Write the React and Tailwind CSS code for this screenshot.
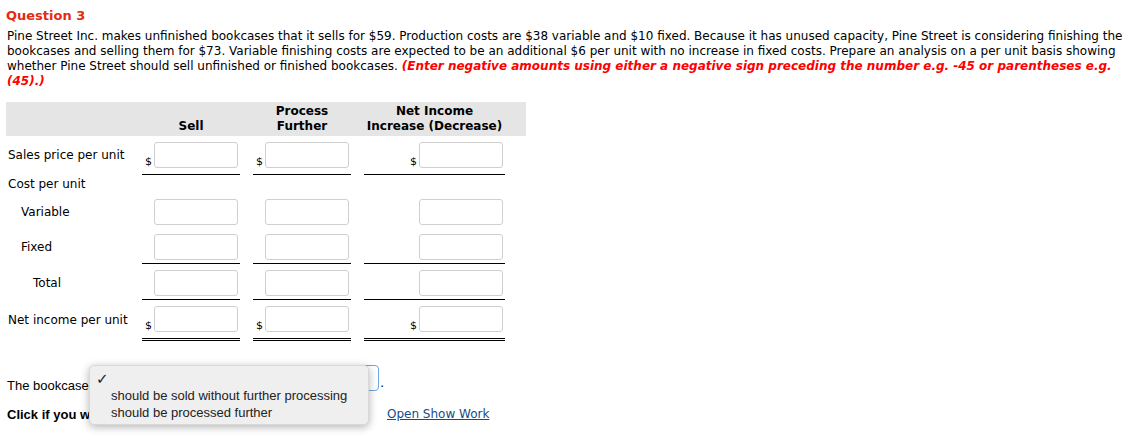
const verdana = "font-['Verdana','DejaVu_Sans',sans-serif]";
const arial = "font-['Liberation_Sans',Arial,sans-serif]";

function lineClass(line) {
    if (line === "single") return "border-b border-black";
    if (line === "double") return "border-b-[3px] border-double border-black";
    return "";
}

function CellInner({ dollar, w }) {
    return (
        <div className={`flex items-end justify-end pr-[2px] ${w}`}>
            {dollar && <span className="mr-[2px] text-[11px] leading-none mb-[1px]">$</span>}
            <div className="w-[84px] h-[26px] border border-[#cfcfcf] rounded-[3px] bg-white" />
        </div>
    );
}

function Row({ label, indent = "pl-[2px]", dollar = false, line = "none", pt = "pt-[6px]", pb = "pb-[6px]" }) {
    return (
        <div className={`flex items-stretch ${pt}`}>
            <div className={`w-[136px] flex items-center ${indent} ${pb}`}>{label}</div>
            <div className="flex items-stretch gap-[13px]">
                <div className={`${pb} ${lineClass(line)}`}>
                    <CellInner dollar={dollar} w="w-[98px]" />
                </div>
                <div className={`${pb} ${lineClass(line)}`}>
                    <CellInner dollar={dollar} w="w-[98px]" />
                </div>
                <div className={`${pb} ${lineClass(line)}`}>
                    <CellInner dollar={dollar} w="w-[141px]" />
                </div>
            </div>
        </div>
    );
}

export default function App() {
    return (
        <div className={`min-h-screen bg-white text-black ${verdana} text-[12px] leading-[15px] pl-[6px] pt-[8px] relative`}>
            <h2 className="font-bold text-[13px] leading-[15px] text-[#e22c10]">Question 3</h2>
            <p className="mt-[6px] pl-[1px] w-[1130px] leading-[15px]">
                Pine Street Inc. makes unfinished bookcases that it sells for $59. Production costs are $38 variable and $10 fixed. Because it has unused capacity, Pine Street is considering finishing the bookcases and selling them for $73. Variable finishing costs are expected to be an additional $6 per unit with no increase in fixed costs. Prepare an analysis on a per unit basis showing whether Pine Street should sell unfinished or finished bookcases.{" "}
                <span className="text-[#ff0000] font-bold italic">
                    (Enter negative amounts using either a negative sign preceding the number e.g. -45 or parentheses e.g. (45).)
                </span>
            </p>

            {/* analysis table */}
            <div className="mt-[13px] w-[520px]">
                <div className="flex bg-[#e5e5e5] h-[34px] font-bold items-end pb-[2px]">
                    <div className="w-[136px]" />
                    <div className="w-[98px] text-center">Sell</div>
                    <div className="w-[13px]" />
                    <div className="w-[98px] text-center">Process<br />Further</div>
                    <div className="w-[13px]" />
                    <div className="w-[141px] text-center">Net Income<br />Increase (Decrease)</div>
                </div>

                <Row label="Sales price per unit" dollar line="single" />
                <div className="h-[18px] flex items-center pl-[2px]">Cost per unit</div>
                <Row label="Variable" indent="pl-[15px]" pb="pb-[4px]" />
                <Row label="Fixed" indent="pl-[15px]" pt="pt-[5px]" pb="pb-[3px]" line="single" />
                <Row label="Total" indent="pl-[27px]" pt="pt-[6px]" pb="pb-[3px]" line="single" />
                <Row label="Net income per unit" indent="pl-[2px]" dollar line="double" />
            </div>

            {/* answer sentence */}
            <div className={`mt-[24px] flex items-end ${arial} text-[13px] pl-[1px]`}>
                <span className="translate-y-[2px]">The bookcases</span>
                <div className="ml-[6px] w-[278px] h-[26px] border border-[#6aa7e8] rounded-[4px] bg-white" />
                <span className={`${verdana} text-[12px] ml-[1px]`}>.</span>
            </div>
            <div className="mt-[16px] flex items-center pl-[1px]">
                <span className={`${arial} font-bold text-[13px] w-[380px]`}>
                    Click if you want to Show Work for this question:
                </span>
                <a href="#" className="text-[#154a8c] underline text-[12px]">Open Show Work</a>
            </div>

            {/* open select menu */}
            <div className={`absolute left-[89px] top-[365px] w-[280px] h-[60px] bg-[#efefef] rounded-[5px] shadow-[0_2px_8px_rgba(0,0,0,0.3)] border border-[#d8d8d8] ${arial} text-[13px] text-[#222]`}>
                <span className="absolute left-[6px] top-[5px] font-['DejaVu_Sans',sans-serif] text-[15px] leading-[17px]">✓</span>
                <div className="absolute left-[21px] top-[21px] leading-[17px]">
                    <div>should be sold without further processing</div>
                    <div>should be processed further</div>
                </div>
            </div>
        </div>
    );
}
